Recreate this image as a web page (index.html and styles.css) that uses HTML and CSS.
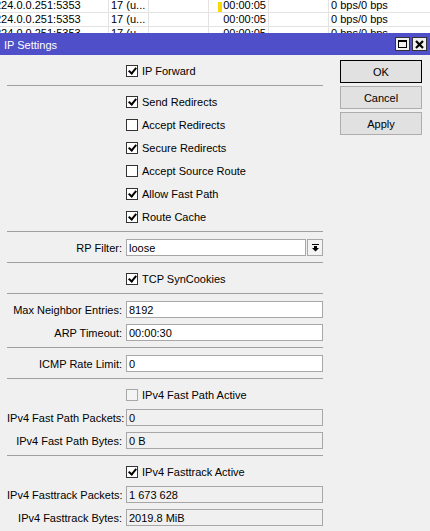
FILE: index.html
```html
<!DOCTYPE html>
<html lang="en">
<head>
  <meta charset="UTF-8">
  <meta name="viewport" content="width=device-width, initial-scale=1.0">
  <title>IP Settings</title>
  <link rel="stylesheet" href="styles.css">
</head>
<body>

  <!-- connection list, scrolled a little to the right -->
  <div class="list">
    <div class="list-inner">
      <div class="list-row">
        <div class="cell c-addr">224.0.0.251:5353</div>
        <div class="cell c-proto">17 (u...</div>
        <div class="cell c-wide"></div>
        <div class="cell c-timeout"><span class="mark"></span><span class="time">00:00:05</span></div>
        <div class="cell c-wide"></div>
        <div class="cell c-rate">0 bps/0 bps</div>
      </div>
      <div class="list-row">
        <div class="cell c-addr">224.0.0.251:5353</div>
        <div class="cell c-proto">17 (u...</div>
        <div class="cell c-wide"></div>
        <div class="cell c-timeout"><span class="time">00:00:05</span></div>
        <div class="cell c-wide"></div>
        <div class="cell c-rate">0 bps/0 bps</div>
      </div>
      <div class="list-row">
        <div class="cell c-addr">224.0.0.251:5353</div>
        <div class="cell c-proto">17 (u...</div>
        <div class="cell c-wide"></div>
        <div class="cell c-timeout"><span class="time">00:00:05</span></div>
        <div class="cell c-wide"></div>
        <div class="cell c-rate">0 bps/0 bps</div>
      </div>
    </div>
  </div>

  <div class="dialog">
    <div class="titlebar">
      <span class="title">IP Settings</span>
      <span class="tb-btn"><span class="icon-max"></span></span>
      <span class="tb-btn">
        <svg width="9" height="9" viewBox="0 0 9 9"><path d="M1 1 L8 8 M8 1 L1 8" stroke="#000" stroke-width="2.2" fill="none"/></svg>
      </span>
    </div>

    <div class="dialog-body">
      <div class="form">

        <div class="section">
          <div class="row"><label class="check"><span class="box on"></span>IP Forward</label></div>
        </div>

        <div class="section">
          <div class="row"><label class="check"><span class="box on"></span>Send Redirects</label></div>
          <div class="row"><label class="check"><span class="box"></span>Accept Redirects</label></div>
          <div class="row"><label class="check"><span class="box on"></span>Secure Redirects</label></div>
          <div class="row"><label class="check"><span class="box"></span>Accept Source Route</label></div>
          <div class="row"><label class="check"><span class="box on"></span>Allow Fast Path</label></div>
          <div class="row"><label class="check"><span class="box on"></span>Route Cache</label></div>
        </div>

        <div class="section">
          <div class="row">
            <span class="lbl">RP Filter:</span>
            <div class="select">
              <span class="field">loose</span>
              <span class="drop">
                <svg width="7" height="8" viewBox="0 0 7 8">
                  <rect x="0" y="0" width="7" height="1" fill="#000"/>
                  <rect x="2" y="2" width="3" height="2" fill="#000"/>
                  <polygon points="0,4 7,4 3.5,7.5" fill="#000"/>
                </svg>
              </span>
            </div>
          </div>
        </div>

        <div class="section">
          <div class="row"><label class="check"><span class="box on"></span>TCP SynCookies</label></div>
        </div>

        <div class="section">
          <div class="row"><span class="lbl">Max Neighbor Entries:</span><span class="field">8192</span></div>
          <div class="row"><span class="lbl">ARP Timeout:</span><span class="field">00:00:30</span></div>
        </div>

        <div class="section">
          <div class="row"><span class="lbl">ICMP Rate Limit:</span><span class="field">0</span></div>
        </div>

        <div class="section">
          <div class="row"><label class="check"><span class="box ro"></span>IPv4 Fast Path Active</label></div>
          <div class="row"><span class="lbl">IPv4 Fast Path Packets:</span><span class="field ro">0</span></div>
          <div class="row"><span class="lbl">IPv4 Fast Path Bytes:</span><span class="field ro">0 B</span></div>
        </div>

        <div class="section">
          <div class="row"><label class="check"><span class="box on"></span>IPv4 Fasttrack Active</label></div>
          <div class="row"><span class="lbl">IPv4 Fasttrack Packets:</span><span class="field ro">1 673 628</span></div>
          <div class="row"><span class="lbl">IPv4 Fasttrack Bytes:</span><span class="field ro">2019.8 MiB</span></div>
        </div>

      </div>

      <div class="actions">
        <button type="button" class="btn default">OK</button>
        <button type="button" class="btn">Cancel</button>
        <button type="button" class="btn">Apply</button>
      </div>
    </div>
  </div>

</body>
</html>
```

FILE: styles.css
```css
body {
  margin: 0;
  font-family: "Liberation Sans", Arial, sans-serif;
  font-size: 11px;
  color: #000;
  background-color: #f0f0f0;
  overflow: hidden;
}

/* list behind the dialog */
.list {
  height: 33px;
  overflow: hidden;
  background-color: #fff;
}

.list-inner {
  margin-top: -1px;
  margin-left: -12px;
}

.list-row {
  display: flex;
  height: 14px;
  border-bottom: 1px solid #e3e3e3;
  box-sizing: border-box;
}

.cell {
  box-sizing: border-box;
  border-right: 1px solid #e3e3e3;
  padding-left: 2px;
  line-height: 13px;
  white-space: nowrap;
  overflow: hidden;
}

.c-addr { width: 121px; padding-left: 7px; }
.c-proto { width: 40px; }
.c-wide { width: 60px; }
.c-rate { flex: 1; border-right: none; }

.c-timeout {
  width: 60px;
  display: flex;
  align-items: flex-start;
  padding-right: 2px;
}

.mark {
  width: 4px;
  height: 10px;
  margin-top: 3px;
  margin-left: 7px;
  background-color: #f7d900;
}

.time {
  margin-left: auto;
}

/* dialog window */
.dialog {
  background-color: #f0f0f0;
}

.titlebar {
  height: 22px;
  display: flex;
  align-items: center;
  background-color: #4f4fc9;
  color: #fff;
  padding-left: 4px;
  padding-right: 3px;
}

.title {
  font-size: 11px;
  margin-top: 1px;
  margin-right: auto;
}

.tb-btn {
  width: 15px;
  height: 14px;
  box-sizing: border-box;
  border: 1px solid #333;
  background-color: #f0f0f0;
  display: flex;
  align-items: center;
  justify-content: center;
  margin-left: 2px;
}

.icon-max {
  width: 9px;
  height: 8px;
  box-sizing: border-box;
  border: 1px solid #000;
  border-top-width: 2px;
}

.dialog-body {
  display: flex;
  padding-left: 7px;
  height: 476px;
  overflow: hidden;
}

.form {
  width: 316px;
}

.section {
  padding: 4px 0 3px;
  border-bottom: 1px solid #a0a0a0;
}

.section:last-child {
  border-bottom: none;
}

.row {
  display: grid;
  grid-template-columns: 115px 197px;
  column-gap: 4px;
  height: 23px;
  align-items: center;
}

.lbl {
  text-align: right;
  white-space: nowrap;
}

/* checkboxes */
.check {
  grid-column: 2;
  display: flex;
  align-items: center;
  gap: 4px;
}

.box {
  width: 12px;
  height: 12px;
  box-sizing: border-box;
  border: 1px solid #333;
  background-color: #fff;
  position: relative;
}

.box.ro {
  border-color: #a8a8a8;
  background-color: #f4f4f4;
}

.box.on::after {
  content: "";
  position: absolute;
  left: 3px;
  top: 0;
  width: 3px;
  height: 6px;
  border-right: 2px solid #000;
  border-bottom: 2px solid #000;
  transform: rotate(40deg);
}

/* text fields */
.field {
  height: 17px;
  box-sizing: border-box;
  border: 1px solid #a7a7a7;
  background-color: #fff;
  padding: 0 2px;
  display: flex;
  align-items: center;
  white-space: nowrap;
}

.field.ro {
  background-color: #f0f0f0;
}

.select {
  display: flex;
  gap: 1px;
}

.select .field {
  flex: 1;
}

.drop {
  width: 16px;
  height: 17px;
  box-sizing: border-box;
  border: 1px solid #a7a7a7;
  background-color: #f3f3f3;
  display: flex;
  align-items: center;
  justify-content: center;
}

/* buttons on the right */
.actions {
  margin-left: 17px;
  padding-top: 5px;
  width: 82px;
  display: flex;
  flex-direction: column;
  gap: 3px;
}

.btn {
  height: 23px;
  padding: 0;
  font-family: inherit;
  font-size: 11px;
  color: #000;
  background-color: #e1e1e1;
  border: 1px solid #adadad;
}

.btn.default {
  border-color: #000;
}
```
